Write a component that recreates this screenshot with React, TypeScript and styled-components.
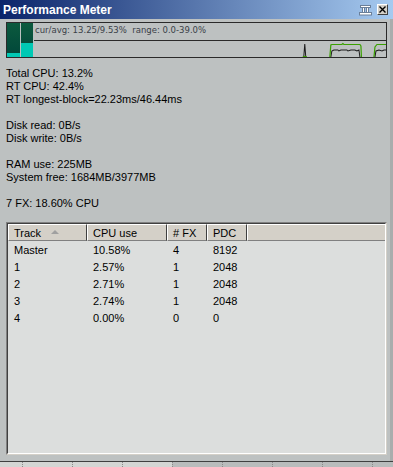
import React from "react";
import styled, { createGlobalStyle } from "styled-components";

const GlobalStyle = createGlobalStyle`
  html, body {
    margin: 0;
    padding: 0;
    background: #bdc1c1;
  }
  * {
    box-sizing: border-box;
  }
`;

const stats = [
  "Total CPU: 13.2%",
  "RT CPU: 42.4%",
  "RT longest-block=22.23ms/46.44ms",
  "",
  "Disk read: 0B/s",
  "Disk write: 0B/s",
  "",
  "RAM use: 225MB",
  "System free: 1684MB/3977MB",
  "",
  "7 FX: 18.60% CPU",
];

const columns = [
  { label: "Track", width: 79, sort: true },
  { label: "CPU use", width: 80 },
  { label: "# FX", width: 40 },
  { label: "PDC", width: 40 },
];

const rows = [
  ["Master", "10.58%", "4", "8192"],
  ["1", "2.57%", "1", "2048"],
  ["2", "2.71%", "1", "2048"],
  ["3", "2.74%", "1", "2048"],
  ["4", "0.00%", "0", "0"],
];

const PinIcon = () => (
  <svg width="13" height="11" viewBox="0 0 13 11">
    <rect x="1.5" y="0.5" width="10" height="2" fill="#fff" stroke="#6b7f99" strokeWidth="1" />
    <rect x="3.5" y="2.5" width="2" height="5.5" fill="#fff" stroke="#6b7f99" strokeWidth="1" />
    <rect x="7.5" y="2.5" width="2" height="5.5" fill="#fff" stroke="#6b7f99" strokeWidth="1" />
    <rect x="0.5" y="7.5" width="12" height="2.5" fill="#fff" stroke="#6b7f99" strokeWidth="1" />
  </svg>
);

const CloseIcon = () => (
  <svg width="7" height="7" viewBox="0 0 7 7">
    <path d="M0.5 0.5 L6.5 6.5 M6.5 0.5 L0.5 6.5" stroke="#000" strokeWidth="1.4" />
  </svg>
);

const Graph = () => (
  <svg width="100%" height="16" viewBox="0 0 351 16" preserveAspectRatio="none">
    <polyline points="269,16 270,3 271,16" fill="none" stroke="#1c1c1c" strokeWidth="1" />
    <line x1="268" y1="15.5" x2="272" y2="15.5" stroke="#3a9a00" strokeWidth="1" />
    <polyline
      points="296,16 297,10 299,9 303,9 304,10 306,9 312,9 313,10 316,9 320,9 322,10 324,9 325,16"
      fill="none"
      stroke="#1c1c1c"
      strokeWidth="1"
    />
    <polyline
      points="295,16 296,4 297,3.5 307,3.5 308,2.5 309,3.5 325,3.5 326,5 326.5,16"
      fill="none"
      stroke="#3aa000"
      strokeWidth="1.2"
    />
    <polyline points="340,16 341,10 344,9 347,10 349,9 351,9" fill="none" stroke="#1c1c1c" strokeWidth="1" />
    <polyline points="339,16 340,6 342,3.5 351,3.5" fill="none" stroke="#3aa000" strokeWidth="1.2" />
  </svg>
);

export default function App() {
  return (
    <>
      <GlobalStyle />
      <Window>
        <TitleBar>
          <Title>Performance Meter</Title>
          <TitleButtons>
            <PinButton>
              <PinIcon />
            </PinButton>
            <CloseButton>
              <CloseIcon />
            </CloseButton>
          </TitleButtons>
        </TitleBar>
        <Body>
          <Meter>
            <Bar>
              <BarFill style={{ height: 4 }} />
            </Bar>
            <Bar $last>
              <BarFill style={{ height: 14 }} />
            </Bar>
            <GraphColumn>
              <Readout>cur/avg: 13.25/9.53%  range: 0.0-39.0%</Readout>
              <GraphArea>
                <Graph />
              </GraphArea>
            </GraphColumn>
          </Meter>
          <Stats>
            {stats.map((line, i) => (
              <StatLine key={i}>{line || "\u00a0"}</StatLine>
            ))}
          </Stats>
          <ListFrame>
            <ListInner>
              <HeaderRow>
                {columns.map((c) => (
                  <HeaderCell key={c.label} $width={c.width}>
                    {c.label}
                    {c.sort && <SortArrow />}
                  </HeaderCell>
                ))}
                <HeaderFiller />
              </HeaderRow>
              {rows.map((r, i) => (
                <Row key={i}>
                  {r.map((v, j) => (
                    <Cell key={j} $width={columns[j].width}>
                      {v}
                    </Cell>
                  ))}
                </Row>
              ))}
            </ListInner>
          </ListFrame>
        </Body>
        <Ruler>
          {Array.from({ length: 8 }).map((_, i) => (
            <Tick key={i} />
          ))}
        </Ruler>
      </Window>
    </>
  );
}

const Window = styled.div`
  width: 393px;
  height: 467px;
  overflow: hidden;
  display: flex;
  flex-direction: column;
  background: #bdc1c1;
  font-family: "Liberation Sans", Arial, sans-serif;
`;

const TitleBar = styled.div`
  height: 19px;
  flex: none;
  display: flex;
  align-items: center;
  justify-content: space-between;
  padding: 0 5px 0 3px;
  background: linear-gradient(to right, #0a246a, #a6caf0);
`;

const Title = styled.span`
  color: #fff;
  font-weight: bold;
  font-size: 12px;
`;

const TitleButtons = styled.div`
  display: flex;
  align-items: center;
  gap: 5px;
`;

const PinButton = styled.div`
  display: flex;
  margin-top: 1px;
`;

const CloseButton = styled.div`
  width: 11px;
  height: 11px;
  display: flex;
  align-items: center;
  justify-content: center;
  background: #d4d0c8;
  border-top: 1px solid #fff;
  border-left: 1px solid #fff;
  border-right: 1px solid #404040;
  border-bottom: 1px solid #404040;
`;

const Body = styled.div`
  flex: none;
  padding: 3px 3px 6px 6px;
  border-right: 3px solid #a9adad;
`;

const Meter = styled.div`
  height: 36px;
  display: flex;
  border: 1px solid #2a2a2a;
`;

const Bar = styled.div<{ $last?: boolean }>`
  width: ${(p) => (p.$last ? 12 : 13)}px;
  margin-right: 1px;
  display: flex;
  flex-direction: column;
  justify-content: flex-end;
  background: linear-gradient(to bottom, #0c5a3e, #00463a);
`;

const BarFill = styled.div`
  background: #00c9b4;
`;

const GraphColumn = styled.div`
  flex: 1;
  display: flex;
  flex-direction: column;
`;

const Readout = styled.div`
  height: 18px;
  padding: 2px 0 0 1px;
  border-bottom: 1px solid #2a2a2a;
  color: #3a3f48;
  font-family: "DejaVu Sans", Verdana, sans-serif;
  font-size: 8.5px;
  line-height: 10px;
  white-space: pre;
`;

const GraphArea = styled.div`
  flex: 1;
  display: flex;
  align-items: flex-end;
  overflow: hidden;
`;

const Stats = styled.div`
  margin-top: 9px;
`;

const StatLine = styled.div`
  font-size: 11px;
  line-height: 13px;
  height: 13px;
  color: #000;
  white-space: nowrap;
`;

const ListFrame = styled.div`
  margin-top: 12px;
  height: 233px;
  border-top: 1px solid #808080;
  border-left: 1px solid #808080;
  border-right: 1px solid #d4d0c8;
  border-bottom: 1px solid #d4d0c8;
`;

const ListInner = styled.div`
  height: 100%;
  background: #dcdedd;
  border-top: 1px solid #404040;
  border-left: 1px solid #404040;
  border-right: 1px solid #fff;
  border-bottom: 1px solid #fff;
  overflow: hidden;
`;

const HeaderRow = styled.div`
  display: flex;
  height: 17px;
`;

const HeaderCell = styled.div<{ $width: number }>`
  width: ${(p) => p.$width}px;
  flex: none;
  display: flex;
  align-items: center;
  padding-left: 5px;
  background: #d4d0c8;
  border-top: 1px solid #fff;
  border-left: 1px solid #fff;
  border-right: 1px solid #404040;
  border-bottom: 1px solid #808080;
  font-size: 11px;
  color: #000;
`;

const HeaderFiller = styled.div`
  flex: 1;
  background: #d4d0c8;
  border-top: 1px solid #fff;
  border-left: 1px solid #fff;
  border-bottom: 1px solid #808080;
`;

const SortArrow = styled.span`
  margin-left: 10px;
  margin-top: -1px;
  width: 0;
  height: 0;
  border-left: 4px solid transparent;
  border-right: 4px solid transparent;
  border-bottom: 4px solid #a0a0a0;
`;

const Row = styled.div`
  display: flex;
  height: 17px;
  align-items: center;
`;

const Cell = styled.div<{ $width: number }>`
  width: ${(p) => p.$width}px;
  flex: none;
  padding-left: 6px;
  font-size: 11px;
  color: #000;
`;

const Ruler = styled.div`
  flex: 1;
  display: flex;
  padding-left: 22px;
  border-top: 1px solid #404040;
  background: linear-gradient(to right, #d4d6d4 172px, #b9bcbc 172px);
`;

const Tick = styled.div`
  width: 50px;
  flex: none;
  border-left: 1px dotted #8a8a8a;
`;
